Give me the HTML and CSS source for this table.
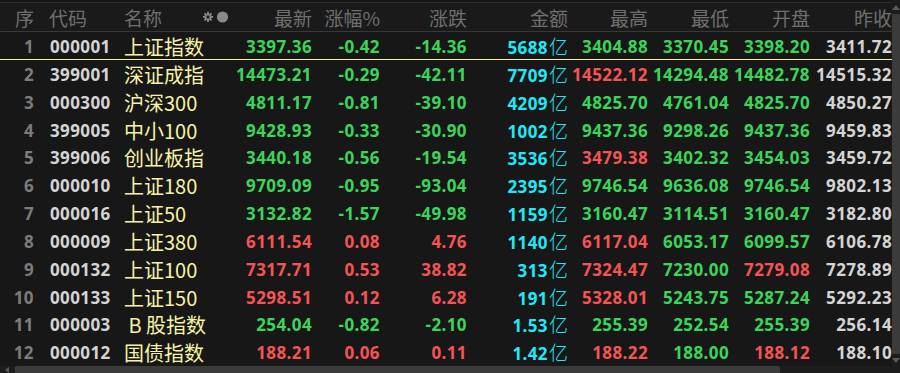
FILE: index.html
```html
<!DOCTYPE html>
<html>

<head>
	<meta charset="UTF-8">
	<title>指数行情</title>
	<link rel="stylesheet" href="styles.css">
</head>

<body>
	<div class="quote">
		<div class="main">
			<div class="grid">
				<div class="row head">
					<span>序</span>
					<span class="code">代码</span>
					<span class="name">名称
						<svg class="mark" viewBox="0 0 26 12">
							<path fill="currentColor" d="M4.2 0.8h1.6l0.3 2.4 1.9-1.4 1.1 1.1-1.4 1.9 2.4 0.3v1.6l-2.4 0.3 1.4 1.9-1.1 1.1-1.9-1.4-0.3 2.4H4.2l-0.3-2.4-1.9 1.4-1.1-1.1 1.4-1.9L-0.1 6.7V5.1l2.4-0.3L0.9 2.9 2 1.8l1.9 1.4z"/>
							<circle cx="5" cy="5.9" r="1.6" fill="#1a1a1a"/>
							<circle fill="currentColor" cx="19.5" cy="6" r="5.6"/>
						</svg>
					</span>
					<span>最新</span>
					<span>涨幅%</span>
					<span>涨跌</span>
					<span>金额</span>
					<span>最高</span>
					<span>最低</span>
					<span>开盘</span>
					<span>昨收</span>
				</div>

				<div class="row first">
					<span class="no">1</span><span class="code">000001</span><span class="name">上证指数</span>
					<span class="g">3397.36</span><span class="g">-0.42</span><span class="g">-14.36</span>
					<span class="amt">5688<i>亿</i></span>
					<span class="g">3404.88</span><span class="g">3370.45</span><span class="g">3398.20</span><span class="w">3411.72</span>
				</div>
				<div class="row">
					<span class="no">2</span><span class="code">399001</span><span class="name">深证成指</span>
					<span class="g">14473.21</span><span class="g">-0.29</span><span class="g">-42.11</span>
					<span class="amt">7709<i>亿</i></span>
					<span class="r">14522.12</span><span class="g">14294.48</span><span class="g">14482.78</span><span class="w">14515.32</span>
				</div>
				<div class="row">
					<span class="no">3</span><span class="code">000300</span><span class="name">沪深300</span>
					<span class="g">4811.17</span><span class="g">-0.81</span><span class="g">-39.10</span>
					<span class="amt">4209<i>亿</i></span>
					<span class="g">4825.70</span><span class="g">4761.04</span><span class="g">4825.70</span><span class="w">4850.27</span>
				</div>
				<div class="row">
					<span class="no">4</span><span class="code">399005</span><span class="name">中小100</span>
					<span class="g">9428.93</span><span class="g">-0.33</span><span class="g">-30.90</span>
					<span class="amt">1002<i>亿</i></span>
					<span class="g">9437.36</span><span class="g">9298.26</span><span class="g">9437.36</span><span class="w">9459.83</span>
				</div>
				<div class="row">
					<span class="no">5</span><span class="code">399006</span><span class="name">创业板指</span>
					<span class="g">3440.18</span><span class="g">-0.56</span><span class="g">-19.54</span>
					<span class="amt">3536<i>亿</i></span>
					<span class="r">3479.38</span><span class="g">3402.32</span><span class="g">3454.03</span><span class="w">3459.72</span>
				</div>
				<div class="row">
					<span class="no">6</span><span class="code">000010</span><span class="name">上证180</span>
					<span class="g">9709.09</span><span class="g">-0.95</span><span class="g">-93.04</span>
					<span class="amt">2395<i>亿</i></span>
					<span class="g">9746.54</span><span class="g">9636.08</span><span class="g">9746.54</span><span class="w">9802.13</span>
				</div>
				<div class="row">
					<span class="no">7</span><span class="code">000016</span><span class="name">上证50</span>
					<span class="g">3132.82</span><span class="g">-1.57</span><span class="g">-49.98</span>
					<span class="amt">1159<i>亿</i></span>
					<span class="g">3160.47</span><span class="g">3114.51</span><span class="g">3160.47</span><span class="w">3182.80</span>
				</div>
				<div class="row">
					<span class="no">8</span><span class="code">000009</span><span class="name">上证380</span>
					<span class="r">6111.54</span><span class="r">0.08</span><span class="r">4.76</span>
					<span class="amt">1140<i>亿</i></span>
					<span class="r">6117.04</span><span class="g">6053.17</span><span class="g">6099.57</span><span class="w">6106.78</span>
				</div>
				<div class="row">
					<span class="no">9</span><span class="code">000132</span><span class="name">上证100</span>
					<span class="r">7317.71</span><span class="r">0.53</span><span class="r">38.82</span>
					<span class="amt">313<i>亿</i></span>
					<span class="r">7324.47</span><span class="g">7230.00</span><span class="r">7279.08</span><span class="w">7278.89</span>
				</div>
				<div class="row">
					<span class="no">10</span><span class="code">000133</span><span class="name">上证150</span>
					<span class="r">5298.51</span><span class="r">0.12</span><span class="r">6.28</span>
					<span class="amt">191<i>亿</i></span>
					<span class="r">5328.01</span><span class="g">5243.75</span><span class="g">5287.24</span><span class="w">5292.23</span>
				</div>
				<div class="row">
					<span class="no">11</span><span class="code">000003</span><span class="name">&nbsp;B 股指数</span>
					<span class="g">254.04</span><span class="g">-0.82</span><span class="g">-2.10</span>
					<span class="amt">1.53<i>亿</i></span>
					<span class="g">255.39</span><span class="g">252.54</span><span class="g">255.39</span><span class="w">256.14</span>
				</div>
				<div class="row">
					<span class="no">12</span><span class="code">000012</span><span class="name">国债指数</span>
					<span class="r">188.21</span><span class="r">0.06</span><span class="r">0.11</span>
					<span class="amt">1.42<i>亿</i></span>
					<span class="r">188.22</span><span class="g">188.00</span><span class="r">188.12</span><span class="w">188.10</span>
				</div>
			</div>

			<div class="vbar">
				<span class="arrow up"></span>
				<span class="thumb"></span>
				<span class="arrow down"></span>
			</div>
		</div>

		<div class="hbar">
			<span class="arrow left"></span>
			<span class="thumb"></span>
		</div>
	</div>
</body>

</html>
```

FILE: styles.css
```css
html,
body {
	width: 100%;
	height: 100%;
	margin: 0;
	padding: 0;
	background: #121212;
	overflow: hidden;
	font-family: "Noto Sans", "Noto Sans CJK SC", sans-serif;
}

.quote {
	display: flex;
	flex-direction: column;
	height: 373px;
}

.main {
	display: flex;
	height: 366px;
}

.grid {
	width: 892px;
	display: grid;
	grid-template-rows: 32px repeat(12, minmax(0, 1fr));
	background: #171717;
}

.row {
	display: grid;
	grid-template-columns: 34px 86px 112px 80px 68px 87px 101px 80px 81px 81px 82px;
	align-items: center;
	font-size: 17px;
	font-weight: 700;
	letter-spacing: 0.4px;
	line-height: 1;
	white-space: nowrap;
}

.row>span {
	text-align: right;
	line-height: 27px;
}

.row.head {
	box-sizing: border-box;
	margin-top: 2px;
	border-top: 1px solid #2e2e2e;
	border-bottom: 1px solid #383838;
	background: #1a1a1a;
	color: #6f6f6f;
	font-family: "Noto Sans CJK SC", sans-serif;
	font-size: 19px;
	font-weight: 400;
	letter-spacing: 0;
}

.row.first {
	border-bottom: 1px solid #f4f0a8;
}

.row>.code {
	text-align: left;
	padding-left: 16px;
	color: #d4d4d4;
}

.row.head>.code {
	padding-left: 15px;
	color: #6f6f6f;
}

.row>.name {
	text-align: left;
	padding-left: 4px;
	font-family: "Noto Sans CJK SC", sans-serif;
	font-size: 20px;
	font-weight: 400;
	letter-spacing: 0;
	color: #f6f3a6;
}

.row.head>.name {
	display: flex;
	align-items: center;
	justify-content: space-between;
	padding-right: 3px;
	font-size: 19px;
	color: #6f6f6f;
}

.mark {
	width: 26px;
	height: 12px;
	color: #8a8a8a;
}

.no {
	color: #7c7c7c;
}

.g {
	color: #3cd45a;
}

.r {
	color: #f55454;
}

.w {
	color: #d4d4d4;
}

.amt {
	color: #22e8f6;
}

.amt>i {
	font-style: normal;
	font-family: "Noto Sans CJK SC", sans-serif;
	font-weight: 300;
	font-size: 19px;
	letter-spacing: 0;
	margin-left: 1px;
}

.vbar {
	width: 8px;
	display: flex;
	flex-direction: column;
	align-items: center;
	background: #1c1c1c;
}

.vbar>.thumb {
	flex: 1;
	width: 8px;
	margin: 4px 0;
	background: #3b3b3b;
	border-radius: 1px;
}

.arrow {
	width: 0;
	height: 0;
	border: 4px solid transparent;
}

.arrow.up {
	margin-top: 5px;
	border-top: none;
	border-bottom: 5px solid #5a5a5a;
}

.arrow.down {
	margin-bottom: 3px;
	border-bottom: none;
	border-top: 5px solid #5a5a5a;
}

.hbar {
	height: 7px;
	display: flex;
	align-items: center;
	background: #1c1c1c;
}

.arrow.left {
	margin-left: 5px;
	border-width: 3px;
	border-left: none;
	border-right: 4px solid #5a5a5a;
}

.hbar>.thumb {
	width: 765px;
	height: 7px;
	margin-left: 6px;
	background: #3b3b3b;
	border-radius: 2px 2px 0 0;
}
```
